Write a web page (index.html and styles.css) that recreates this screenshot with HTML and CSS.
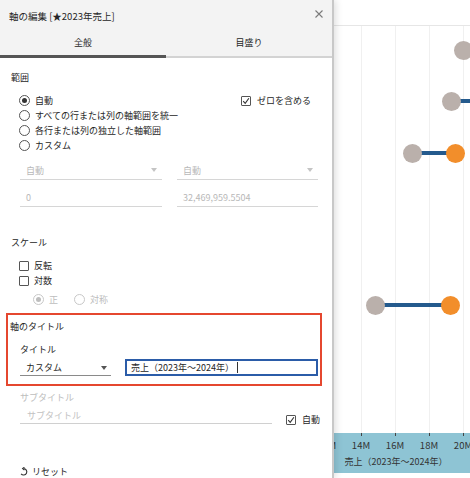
FILE: index.html
```html
<!DOCTYPE html>
<html lang="ja">
<head>
<meta charset="utf-8">
<title>軸の編集</title>
<link rel="stylesheet" href="styles.css">
</head>
<body>
<div class="screen">
  <section class="dialog">
    <header class="dlg-head">
      <span class="dlg-title">軸の編集 [★2023年売上]</span>
      <svg class="close" width="8" height="8" viewBox="0 0 8 8"><path d="M0.5 0.5 L7.5 7.5 M7.5 0.5 L0.5 7.5" stroke="#7a7a7a" stroke-width="1.1" fill="none"/></svg>
    </header>
    <nav class="tabs">
      <div class="tab active">全般</div>
      <div class="tab">目盛り</div>
    </nav>
    <div class="dlg-body">
      <div class="sec-label range-label">範囲</div>
      <div class="range-row">
        <div class="radios">
          <div class="opt"><span class="radio on"></span><span class="lbl">自動</span></div>
          <div class="opt"><span class="radio"></span><span class="lbl">すべての行または列の軸範囲を統一</span></div>
          <div class="opt"><span class="radio"></span><span class="lbl">各行または列の独立した軸範囲</span></div>
          <div class="opt"><span class="radio"></span><span class="lbl">カスタム</span></div>
        </div>
        <div class="opt zero"><span class="check"><svg width="8" height="8" viewBox="0 0 8 8"><path d="M1.2 4.2 L3.2 6.4 L6.9 1.2" stroke="#333" stroke-width="1.1" fill="none"/></svg></span><span class="lbl">ゼロを含める</span></div>
      </div>
      <div class="field-row">
        <div class="field select disabled w-left"><span class="lbl">自動</span><span class="arrow"></span></div>
        <div class="field select disabled w-right"><span class="lbl">自動</span><span class="arrow"></span></div>
      </div>
      <div class="field-row second">
        <div class="field disabled w-left"><span class="lbl">0</span></div>
        <div class="field disabled w-right"><span class="lbl">32,469,959.5504</span></div>
      </div>

      <div class="sec-label scale-label">スケール</div>
      <div class="checks">
        <div class="opt"><span class="check"></span><span class="lbl">反転</span></div>
        <div class="opt"><span class="check"></span><span class="lbl">対数</span></div>
      </div>
      <div class="sub-radios">
        <div class="opt dim pos"><span class="radio on"></span><span class="lbl">正</span></div>
        <div class="opt dim"><span class="radio"></span><span class="lbl">対称</span></div>
      </div>

      <div class="title-box">
        <div class="sec-label">軸のタイトル</div>
        <div class="inner-label">タイトル</div>
        <div class="title-row">
          <div class="field select title-select"><span class="lbl">カスタム</span><span class="arrow dark"></span></div>
          <div class="text-input"><span class="lbl">売上（2023年～2024年）</span><span class="caret"></span></div>
        </div>
      </div>

      <div class="sub-label">サブタイトル</div>
      <div class="sub-row">
        <div class="field sub-field"><span class="lbl">サブタイトル</span></div>
        <div class="opt auto"><span class="check"><svg width="8" height="8" viewBox="0 0 8 8"><path d="M1.2 4.2 L3.2 6.4 L6.9 1.2" stroke="#333" stroke-width="1.1" fill="none"/></svg></span><span class="lbl">自動</span></div>
      </div>

      <div class="reset">
        <svg class="reset-icon" width="8" height="9" viewBox="0 0 8 9"><path d="M3.6 1.6 A3.2 3.2 0 1 1 1.1 6.8" stroke="#333" stroke-width="1.1" fill="none"/><path d="M4.4 0.2 L2.6 1.6 L4.4 3.0" stroke="#333" stroke-width="1.1" fill="none"/></svg>
        <span class="lbl">リセット</span>
      </div>
    </div>
  </section>

  <section class="chart">
    <div class="chart-top"></div>
    <div class="plot">
      <span class="grid" style="left:27px"></span>
      <span class="grid" style="left:61px"></span>
      <span class="grid" style="left:95px"></span>
      <span class="grid" style="left:129px"></span>

      <span class="bar" style="left:117px; width:40px; top:75px"></span>
      <span class="bar" style="left:78px; width:43px; top:127px"></span>
      <span class="bar" style="left:41px; width:76px; top:279px"></span>

      <span class="dot gray" style="left:129.5px; top:24px"></span>
      <span class="dot gray" style="left:117px; top:75px"></span>
      <span class="dot gray" style="left:78px; top:127px"></span>
      <span class="dot orange" style="left:121px; top:127px"></span>
      <span class="dot gray" style="left:41.5px; top:279px"></span>
      <span class="dot orange" style="left:116.5px; top:279px"></span>
    </div>
    <div class="axis">
      <span class="tick" style="left:27px"></span>
      <span class="tick" style="left:61px"></span>
      <span class="tick" style="left:95px"></span>
      <span class="tick" style="left:129px"></span>
      <span class="tick-label" style="left:-7px">12M</span>
      <span class="tick-label" style="left:27px">14M</span>
      <span class="tick-label" style="left:61px">16M</span>
      <span class="tick-label" style="left:95px">18M</span>
      <span class="tick-label" style="left:129px">20M</span>
      <span class="axis-title">売上（2023年～2024年）</span>
    </div>
    <div class="chart-foot"></div>
  </section>
</div>
</body>
</html>
```

FILE: styles.css
```css
* { box-sizing: border-box; }
html, body { margin: 0; padding: 0; }
body {
  font-family: "Noto Sans CJK JP", "Noto Sans", sans-serif;
  font-size: 9px;
  color: #262626;
  background: #fff;
}
.screen {
  display: flex;
  width: 470px;
  height: 478px;
  overflow: hidden;
}

/* dialog */
.dialog {
  width: 334px;
  flex-shrink: 0;
  height: 478px;
  display: flex;
  flex-direction: column;
  background: #fff;
  border-right: 2px solid #c8c8c8;
  box-shadow: 2px 0 7px rgba(0,0,0,0.13);
  position: relative;
  z-index: 2;
  overflow: hidden;
}
.dlg-head {
  height: 33px;
  background: #f3f3f3;
  display: flex;
  justify-content: space-between;
  align-items: flex-start;
  padding: 9px 9px 0 9px;
}
.dlg-title { line-height: 14px; font-size: 9.5px; }
.close { margin-top: 1px; }
.tabs {
  display: flex;
  background: #f3f3f3;
}
.tab {
  flex: 1;
  height: 27px;
  text-align: center;
  line-height: 24px;
  border-bottom: 2px solid #d3d3d3;
  padding-bottom: 1px;
}
.tab.active {
  border-bottom: 3px solid #555;
  padding-bottom: 0;
}
.dlg-body {
  flex: 1;
  display: flex;
  flex-direction: column;
}
.sec-label { line-height: 14px; }
.range-label { margin-top: 13px; padding-left: 11px; }

.lbl {
  display: block;
  line-height: 13px;
  white-space: nowrap;
}
.opt {
  display: flex;
  align-items: center;
  height: 15px;
  white-space: nowrap;
}
.radio {
  width: 11px;
  height: 11px;
  border: 1px solid #555;
  border-radius: 50%;
  margin-right: 5px;
  display: flex;
  align-items: center;
  justify-content: center;
  flex-shrink: 0;
}
.radio.on::after {
  content: "";
  width: 5px;
  height: 5px;
  border-radius: 50%;
  background: #333;
}
.check {
  width: 10px;
  height: 10px;
  border: 1px solid #555;
  border-radius: 1px;
  margin-right: 5px;
  display: flex;
  align-items: center;
  justify-content: center;
  flex-shrink: 0;
}
.range-row {
  display: flex;
  margin-top: 8px;
  padding-left: 19px;
}
.radios { width: 222px; }
.zero .check { margin-right: 6px; }

.field-row {
  display: flex;
  gap: 15px;
  margin-top: 8px;
  padding-left: 20px;
}
.field-row.second { margin-top: 9px; }
.field {
  height: 19px;
  border-bottom: 1px solid #d6d6d6;
  padding: 0 5px 0 6px;
  display: flex;
  justify-content: space-between;
  align-items: center;
  white-space: nowrap;
}
.field-row.second .field { height: 18px; }
.disabled { color: #b8b8b8; }
.w-left { width: 142px; }
.w-right { width: 141px; }
.arrow {
  width: 0;
  height: 0;
  border-left: 3px solid transparent;
  border-right: 3px solid transparent;
  border-top: 4px solid #c4c4c4;
}
.arrow.dark { border-top-color: #555; }

.scale-label { margin-top: 29px; padding-left: 11px; }
.checks { margin-top: 8px; padding-left: 19px; }
.sub-radios {
  display: flex;
  margin-top: 4px;
  padding-left: 33px;
}
.dim { color: #bdbdbd; }
.dim .radio { border-color: #c8c8c8; }
.dim .radio.on::after { background: #bdbdbd; }
.pos { width: 41px; }

.title-box {
  margin: 6px 10px 0 6px;
  border: 2px solid #e5472f;
  padding: 5px 2px 8px 2px;
}
.inner-label {
  margin-top: 9px;
  padding-left: 10px;
  line-height: 14px;
}
.title-row {
  display: flex;
  align-items: flex-end;
  gap: 14px;
  margin-top: 2px;
  padding-left: 10px;
}
.title-select {
  width: 91px;
  height: 16px;
  border-bottom-color: #8a8a8a;
  padding-right: 4px;
}
.text-input {
  width: 193px;
  height: 17px;
  border: 2px solid #2b5ca8;
  padding-left: 4px;
  display: flex;
  align-items: center;
  white-space: nowrap;
}
.caret {
  width: 1px;
  height: 11px;
  background: #333;
  margin-left: 3px;
}

.sub-label {
  margin-top: 5px;
  padding-left: 20px;
  line-height: 14px;
  color: #bdbdbd;
}
.sub-row {
  display: flex;
  align-items: flex-end;
  margin-top: 2px;
  padding-left: 20px;
}
.sub-field {
  width: 252px;
  height: 17px;
  padding-left: 7px;
  color: #c2c2c2;
  border-bottom-color: #d0d0d0;
}
.auto {
  height: 11px;
  margin-left: 14px;
  margin-bottom: -1px;
}
.auto .check { margin-right: 6px; }

.reset {
  display: flex;
  align-items: center;
  margin-top: 40px;
  padding-left: 20px;
  height: 14px;
}
.reset-icon { margin-right: 4px; }

/* chart */
.chart {
  flex: 1;
  display: flex;
  flex-direction: column;
  background: #fff;
  overflow: hidden;
  position: relative;
}
.chart-top {
  height: 26px;
  border-bottom: 1px solid #e6e6e6;
  flex-shrink: 0;
}
.plot {
  flex: 1;
  position: relative;
}
.grid {
  position: absolute;
  top: 0;
  bottom: 0;
  width: 1px;
  background: #f0f0f0;
}
.bar {
  position: absolute;
  height: 4px;
  margin-top: -2px;
  background: #245a8d;
}
.dot {
  position: absolute;
  width: 19px;
  height: 19px;
  margin: -9.5px 0 0 -9.5px;
  border-radius: 50%;
}
.dot.gray { background: #bab0ab; }
.dot.orange { background: #f28e2b; }
.axis {
  height: 40px;
  flex-shrink: 0;
  background: #8ec4d4;
  position: relative;
}
.tick {
  position: absolute;
  top: 0;
  width: 1px;
  height: 3px;
  background: #444;
}
.tick-label {
  position: absolute;
  top: 5px;
  transform: translateX(-50%);
  font-size: 9.5px;
  line-height: 14px;
  color: #333;
}
.axis-title {
  position: absolute;
  top: 22px;
  left: 62px;
  transform: translateX(-50%);
  font-size: 9px;
  line-height: 14px;
  white-space: nowrap;
  color: #333;
}
.chart-foot {
  height: 5px;
  flex-shrink: 0;
}
```
